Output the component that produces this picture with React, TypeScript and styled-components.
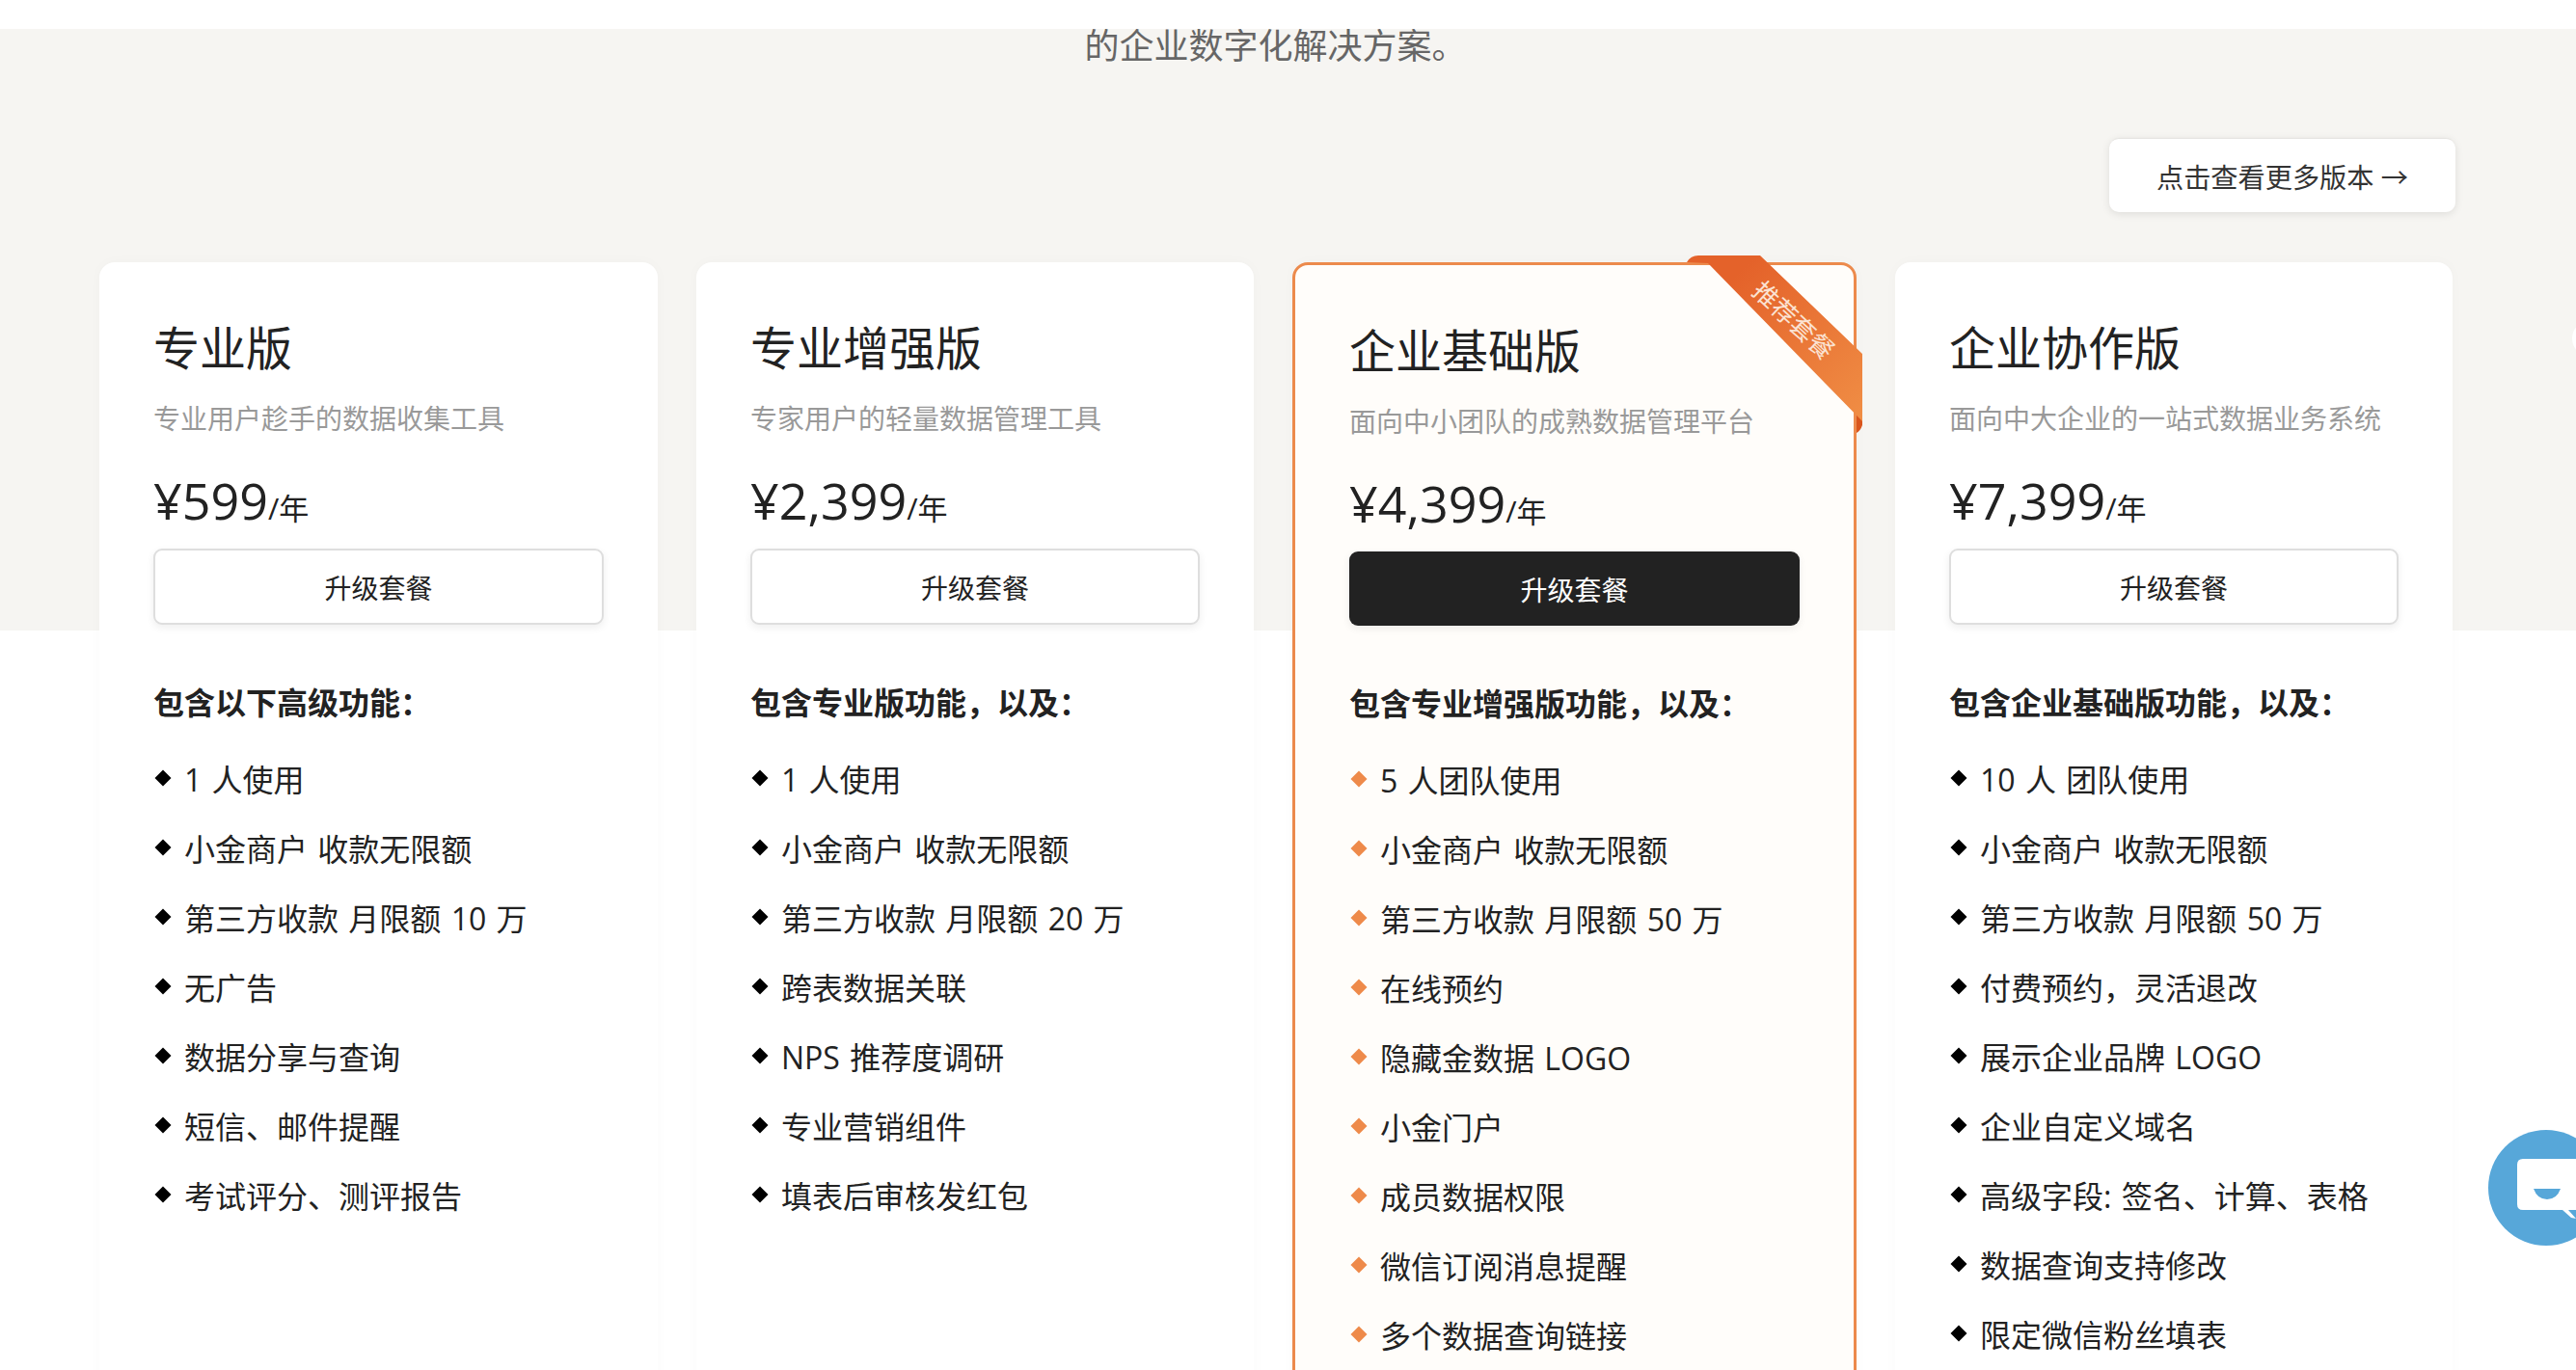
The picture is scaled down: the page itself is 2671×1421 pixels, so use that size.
import styled, { createGlobalStyle } from 'styled-components'

const GlobalStyle = createGlobalStyle`
    html, body {
        margin: 0;
        padding: 0;
        background: #fff;
    }
    * {
        box-sizing: border-box;
    }
`

const Page = styled.div`
    position: relative;
    height: 1421px;
    overflow: hidden;
    padding-top: 30px;
    background: linear-gradient(#f6f5f2 0, #f6f5f2 654px, #fff 654px);
    font-family: "Open Sans", "Noto Sans CJK SC", sans-serif;
    color: #222;
`
const TopBar = styled.div`
    position: absolute;
    top: 0;
    left: 0;
    right: 0;
    height: 30px;
    background: #fff;
    z-index: 2;
`
const Lead = styled.p`
    margin: 0;
    padding: 1px 26px 0 0;
    text-align: center;
    font-size: 36px;
    line-height: 34px;
    color: #666;
`
const MoreRow = styled.div`
    display: flex;
    justify-content: flex-end;
    padding: 78px 125px 0 0;
`
const MoreButton = styled.button`
    height: 77px;
    padding: 0 49px;
    border: 0;
    border-top: 1px solid #e4e3e0;
    border-radius: 10px;
    background: #fff;
    box-shadow: 0 2px 8px rgba(0, 0, 0, 0.1);
    font: inherit;
    font-size: 28.2px;
    color: #333;
`
const Plans = styled.div`
    display: grid;
    grid-template-columns: 579px 578px 585px 578px;
    gap: 40px;
    padding: 52px 0 0 103px;
`
const Card = styled.div<{ $featured?: boolean }>`
    position: relative;
    min-height: 1300px;
    padding: 59px 56px 0;
    border: ${(p) => (p.$featured ? '3px solid #ec8a4c' : '0')};
    border-radius: 16px;
    background: ${(p) => (p.$featured ? '#fffdfa' : '#fff')};
    box-shadow: 0 0 14px rgba(0, 0, 0, 0.025);
`
const Title = styled.h3`
    margin: 0;
    font-size: 48px;
    font-weight: 400;
    line-height: 60px;
    color: #222;
`
const Subtitle = styled.div`
    margin-top: 23px;
    font-size: 28px;
    line-height: 40px;
    color: #999;
    white-space: nowrap;
`
const Price = styled.div`
    margin-top: 35px;
    font-size: 52px;
    line-height: 60px;
    white-space: nowrap;
`
const PerYear = styled.span`
    font-size: 31px;
`
const UpgradeButton = styled.button<{ $featured?: boolean }>`
    display: block;
    width: 100%;
    height: ${(p) => (p.$featured ? '77px' : '79px')};
    margin: 12px 0 ${(p) => (p.$featured ? '3px' : '0')};
    border: ${(p) => (p.$featured ? '0' : '2px solid #dedede')};
    border-radius: 9px;
    background: ${(p) => (p.$featured ? '#222' : '#fff')};
    box-shadow: 0 3px 8px rgba(0, 0, 0, 0.07);
    font: inherit;
    font-size: 28px;
    color: ${(p) => (p.$featured ? '#fff' : '#222')};
`
const FeatureHead = styled.div`
    margin-top: 61px;
    font-size: 32px;
    font-weight: 700;
    line-height: 40px;
    color: #222;
    white-space: nowrap;
`
const FeatureList = styled.ul`
    margin: 22px 0 0;
    padding: 0;
    list-style: none;
`
const Feature = styled.li`
    display: flex;
    align-items: center;
    gap: 13px;
    height: 72px;
    font-size: 32px;
    word-spacing: 2px;
    color: #222;
    white-space: nowrap;
`
const Diamond = styled.span<{ $featured?: boolean }>`
    flex: none;
    width: 12px;
    height: 12px;
    margin: 0 3px 0 4px;
    transform: rotate(45deg);
    background: ${(p) => (p.$featured ? '#ee8a4a' : '#000')};
`
const Ribbon = styled.svg`
    position: absolute;
    top: -10px;
    right: -9px;
`
const RibbonText = styled.span`
    position: absolute;
    left: 517px;
    top: 57px;
    transform: translate(-50%, -50%) rotate(43deg);
    font-size: 26px;
    line-height: 30px;
    color: #fbe3d3;
    white-space: nowrap;
`
const ChatWidget = styled.svg`
    position: absolute;
    right: 0;
    top: 1172px;
`
const EdgeDot = styled.div`
    position: absolute;
    right: -30px;
    top: 333px;
    width: 34px;
    height: 36px;
    border-radius: 50%;
    background: #fff;
`

type Plan = {
    name: string,
    desc: string,
    price: string,
    head: string,
    items: string[],
    featured?: boolean,
}

const plans: Plan[] = [
    {
        name: '专业版',
        desc: '专业用户趁手的数据收集工具',
        price: '¥599',
        head: '包含以下高级功能：',
        items: ['1 人使用', '小金商户 收款无限额', '第三方收款 月限额 10 万', '无广告', '数据分享与查询', '短信、邮件提醒', '考试评分、测评报告'],
    },
    {
        name: '专业增强版',
        desc: '专家用户的轻量数据管理工具',
        price: '¥2,399',
        head: '包含专业版功能，以及：',
        items: ['1 人使用', '小金商户 收款无限额', '第三方收款 月限额 20 万', '跨表数据关联', 'NPS 推荐度调研', '专业营销组件', '填表后审核发红包'],
    },
    {
        name: '企业基础版',
        desc: '面向中小团队的成熟数据管理平台',
        price: '¥4,399',
        head: '包含专业增强版功能，以及：',
        items: ['5 人团队使用', '小金商户 收款无限额', '第三方收款 月限额 50 万', '在线预约', '隐藏金数据 LOGO', '小金门户', '成员数据权限', '微信订阅消息提醒', '多个数据查询链接'],
        featured: true,
    },
    {
        name: '企业协作版',
        desc: '面向中大企业的一站式数据业务系统',
        price: '¥7,399',
        head: '包含企业基础版功能，以及：',
        items: ['10 人 团队使用', '小金商户 收款无限额', '第三方收款 月限额 50 万', '付费预约，灵活退改', '展示企业品牌 LOGO', '企业自定义域名', '高级字段: 签名、计算、表格', '数据查询支持修改', '限定微信粉丝填表'],
    },
]

const App = () => {
    return (
        <Page>
            <GlobalStyle />
            <TopBar />
            <Lead>的企业数字化解决方案。</Lead>
            <MoreRow>
                <MoreButton>点击查看更多版本 →</MoreButton>
            </MoreRow>
            <Plans>
                {plans.map((plan) => (
                    <Card key={plan.name} $featured={plan.featured}>
                        {plan.featured && (
                            <>
                                <Ribbon width="182" height="184" viewBox="0 0 182 184">
                                    <defs>
                                        <linearGradient id="band" x1="0" y1="0" x2="1" y2="1">
                                            <stop offset="0.2" stopColor="#e4622a" />
                                            <stop offset="1" stopColor="#f08e45" />
                                        </linearGradient>
                                    </defs>
                                    <path d="M176 164 L182 171 L182 176 Q180 182 176 184 Z" fill="#d9551d" />
                                    <path d="M0 7 Q4 0 12 0 L76 0 L182 102 L182 172 L22 8 Z" fill="url(#band)" />
                                </Ribbon>
                                <RibbonText>推荐套餐</RibbonText>
                            </>
                        )}
                        <Title>{plan.name}</Title>
                        <Subtitle>{plan.desc}</Subtitle>
                        <Price>{plan.price}<PerYear>/年</PerYear></Price>
                        <UpgradeButton $featured={plan.featured}>升级套餐</UpgradeButton>
                        <FeatureHead>{plan.head}</FeatureHead>
                        <FeatureList>
                            {plan.items.map((item) => (
                                <Feature key={item}>
                                    <Diamond $featured={plan.featured} />
                                    {item}
                                </Feature>
                            ))}
                        </FeatureList>
                    </Card>
                ))}
            </Plans>
            <EdgeDot />
            <ChatWidget width="91" height="120" viewBox="0 0 91 120">
                <circle cx="60" cy="60" r="60" fill="#57a7d9" />
                <path d="M36 30 H91 V83 H83 L91 92 L86 91 L77 83 H36 Q30 83 30 77 V36 Q30 30 36 30 Z" fill="#fff" />
                <path d="M47 61 H75 Q71 72 61 72 Q51 72 47 61 Z" fill="#57a7d9" />
            </ChatWidget>
        </Page>
    )
}

export default App
